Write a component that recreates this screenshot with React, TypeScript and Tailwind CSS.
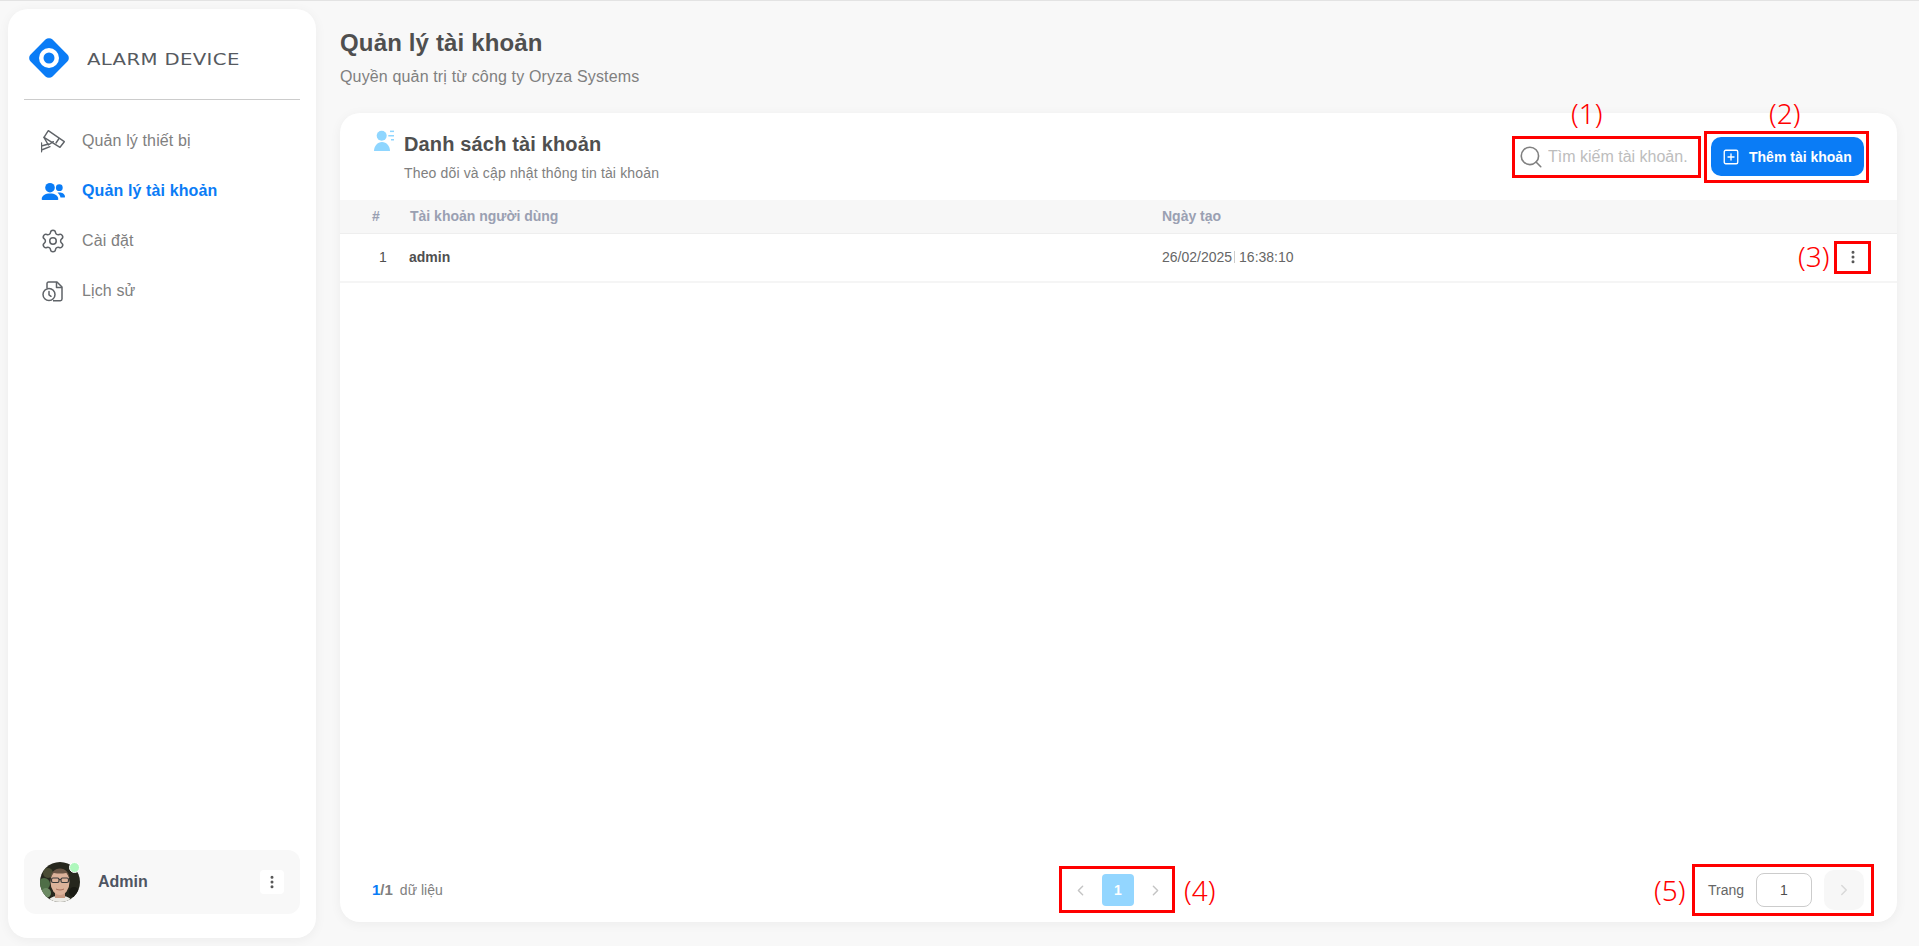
import { ChevronLeft, ChevronRight, EllipsisVertical, Search, Settings, SquarePlus } from 'lucide-react'

const font = "font-['Liberation_Sans',Arial,sans-serif]"

function Logo() {
  return (
    <svg viewBox="0 0 40 40" className="w-10 h-10 shrink-0">
      <rect x="4.500" y="4.500" width="31" height="31" rx="5" fill="#0a7cf6" transform="rotate(45 20 20)" />
      <circle cx="20" cy="20" r="10" fill="#fff" />
      <circle cx="20" cy="20" r="5.500" fill="#0a7cf6" />
    </svg>
  )
}

function CameraIcon() {
  return (
    <svg viewBox="0 0 24 24" className="w-6 h-6" fill="none" stroke="#5f6368" strokeWidth="1.400" strokeLinejoin="round" strokeLinecap="round">
      <path d="M7.300 1.700 23.300 12.700 19 18.300 3 8.300Z" />
      <path d="M3 8.300 7.300 16 12.300 12.700" />
      <path d="M18 9.500 15 14" />
      <path d="M.5 14v8.700M.5 17l7-2M.5 21l8.500-3.300" />
    </svg>
  )
}

function UsersIcon() {
  return (
    <svg viewBox="0 0 24 24" className="w-6 h-6" fill="#0a7cf6">
      <circle cx="9" cy="8.700" r="4.800" />
      <path d="M.7 20.200c0-3.800 3.700-5.700 8.300-5.700s8.300 1.900 8.300 5.700c0 .5-.4.800-.9.800H1.600c-.5 0-.9-.3-.9-.8Z" />
      <circle cx="18.300" cy="8.700" r="3.400" />
      <path d="M16.500 13.700c3.800-.6 7.500 1 7.500 4 0 .6-.4.900-1 .9h-3.500c-.3-2-1.300-3.600-3-4.900Z" />
    </svg>
  )
}

function HistoryIcon() {
  return (
    <svg viewBox="0 0 24 24" className="w-6 h-6" fill="none" stroke="#5f6368" strokeWidth="1.500" strokeLinejoin="round">
      <path d="M6 9V4.500C6 3.700 6.700 3 7.500 3H16l5 5v12c0 1-.8 1.700-1.700 1.700H12" />
      <path d="M15.500 3v5.500H21" />
      <circle cx="8" cy="15.500" r="6" />
      <path d="M8 12.500v3.300l2 1.500" strokeLinecap="round" />
    </svg>
  )
}

function AccountListIcon() {
  return (
    <svg viewBox="0 0 20 22" className="w-5 h-[22px]" fill="#8fd6ff">
      <circle cx="7.700" cy="5.700" r="5" />
      <path d="M0 21c0-5 3.500-9 8-9s8 4 8 9H0Z" />
      <rect x="16" y="0.600" width="4" height="1.500" />
      <rect x="14.300" y="5" width="5.700" height="1.500" />
      <rect x="17" y="9" width="3" height="1.500" />
    </svg>
  )
}

// Hand-drawn stand-in for the profile photo
function Avatar() {
  return (
    <div className="relative w-10 h-10 shrink-0">
      <svg viewBox="0 0 40 40" className="w-10 h-10 rounded-full">
        <rect width="40" height="40" fill="#26271d" />
        <circle cx="4" cy="22" r="6" fill="#4f6e47" />
        <circle cx="6" cy="31" r="5" fill="#6c8a63" />
        <circle cx="8" cy="11" r="5" fill="#4a4c34" />
        <circle cx="34" cy="30" r="5" fill="#1a1b14" />
        <path d="M8 40c1-5 6-6 12-6s11 1 12 6Z" fill="#ecebe6" />
        <rect x="15" y="28" width="10" height="8" fill="#c99c84" />
        <ellipse cx="20" cy="20" rx="9.500" ry="13" fill="#dcb29a" />
        <path d="M10.500 17c0-6 4-10.500 9.500-10.500S29.500 11 29.500 17c-1-4-2-5.500-3.500-6-4 .8-8 .8-12 0-1.500.5-2.500 2-3.500 6Z" fill="#6b5646" />
        <rect x="11.500" y="16" width="7.500" height="4.500" rx="1.500" fill="none" stroke="#3a3a3a" strokeWidth="1.200" />
        <rect x="21" y="16" width="7.500" height="4.500" rx="1.500" fill="none" stroke="#3a3a3a" strokeWidth="1.200" />
        <path d="M19 17.500h2" stroke="#3a3a3a" strokeWidth="1" />
        <path d="M16 27c2.500 1.300 5.500 1.300 8 0" fill="none" stroke="#a8705e" strokeWidth="1" />
      </svg>
      <span className="absolute top-0 right-[0.5px] w-[11px] h-[11px] rounded-full bg-[#aef8bc] border-[1.5px] border-white" />
    </div>
  )
}

const navItems = [
  { label: 'Quản lý thiết bị', icon: <CameraIcon /> },
  { label: 'Quản lý tài khoản', icon: <UsersIcon />, active: true },
  { label: 'Cài đặt', icon: <Settings className="w-[26px] h-[26px] shrink-0 text-[#5f6368]" strokeWidth={1.400} /> },
  { label: 'Lịch sử', icon: <HistoryIcon /> },
]

function Sidebar() {
  return (
    <aside className="flex flex-col w-[308px] h-[929px] shrink-0 bg-white rounded-[20px] shadow-[0_2px_12px_rgba(0,0,0,0.05)] px-4 pb-6">
      <div className="flex items-center gap-[18px] h-[91px] pt-[8px] pl-[5px] border-b border-[#cccccc]">
        <Logo />
        <span className="mt-[3px] origin-left scale-x-[1.23] font-['DejaVu_Sans',sans-serif] text-base tracking-[0.3px] text-[#565a5f]">
          ALARM DEVICE
        </span>
      </div>
      <nav className="flex flex-col gap-[10px] mt-[21px] pl-[17px]">
        {navItems.map((item) => (
          <div key={item.label} className="flex items-center gap-[17px] h-10">
            <span className="w-6 h-6 flex items-center justify-center">{item.icon}</span>
            <span
              className={
                item.active
                  ? 'text-base tracking-[0.12px] font-bold text-[#0a7cf6]'
                  : 'text-base tracking-[0.12px] text-[#808080]'
              }
            >
              {item.label}
            </span>
          </div>
        ))}
      </nav>
      <div className="mt-auto flex items-center h-16 pl-4 pr-4 rounded-xl bg-[#f8f8f8]">
        <Avatar />
        <span className="ml-[18px] text-base font-bold text-[#4f5562]">Admin</span>
        <button className="ml-auto w-6 h-6 flex items-center justify-center bg-white rounded">
          <EllipsisVertical className="w-4 h-4 text-[#555555]" strokeWidth={2.500} />
        </button>
      </div>
    </aside>
  )
}

function CardHeader() {
  return (
    <div className="flex h-[87px] shrink-0 pl-[34px] pr-[33px]">
      <div className="pt-[17px]">
        <AccountListIcon />
      </div>
      <div className="ml-[10px] pt-[18px]">
        <h2 className="text-xl leading-[26px] tracking-[0.15px] font-bold text-[#4f4f4f]">Danh sách tài khoản</h2>
        <p className="mt-[7px] text-sm leading-[18px] tracking-[0.15px] text-[#808080]">
          Theo dõi và cập nhật thông tin tài khoản
        </p>
      </div>
      <div className="ml-auto flex items-center gap-[10px] h-[39px] mt-6">
        <label className="flex items-center gap-[4px] w-[187px] pl-[4px]">
          <Search className="w-[26px] h-[26px] text-[#808080] shrink-0" strokeWidth={1.500} />
          <input
            readOnly
            placeholder="Tìm kiếm tài khoản..."
            className="w-[140px] bg-transparent outline-none text-base placeholder:text-[#bdbdbd]"
          />
        </label>
        <button className="flex items-center gap-[9px] w-[153px] h-[39px] pl-[11px] rounded-[10px] bg-[#0a7cf6] text-sm font-bold text-white">
          <SquarePlus className="w-[18px] h-[18px]" strokeWidth={1.800} />
          Thêm tài khoản
        </button>
      </div>
    </div>
  )
}

function AccountTable() {
  return (
    <div className="flex-1">
      <div className="grid grid-cols-[70px_752px_1fr] items-center h-[34px] pb-[2px] bg-[#f7f7f7] border-b border-[#eeeeee] text-sm font-bold text-[#9aa0b2]">
        <span className="pl-8">#</span>
        <span>Tài khoản người dùng</span>
        <span>Ngày tạo</span>
      </div>
      <div className="grid grid-cols-[70px_752px_1fr_auto] items-center h-[49px] pb-[1px] border-b-[2px] border-[#f5f5f5] text-sm text-[#4f4f4f] pr-[33px]">
        <span className="pl-[39px]">1</span>
        <span className="-ml-px font-bold">admin</span>
        <span className="flex items-center text-[#666666]">
          <span>26/02/2025</span>
          <span className="ml-[2px] mr-[4px] w-px h-3 bg-[#cccccc]" />
          <span>16:38:10</span>
        </span>
        <EllipsisVertical className="w-4 h-4 text-[#555555] mr-[3px]" strokeWidth={2.500} />
      </div>
    </div>
  )
}

function CardFooter() {
  return (
    <div className="grid grid-cols-[1fr_auto_1fr] items-center h-[64px] pl-8 pr-[33px]">
      <div className="flex items-center text-sm text-[#808080]">
        <span className="text-[15px] font-bold">
          <span className="text-[#0a7cf6]">1</span>/1
        </span>
        <span className="ml-[7px]">dữ liệu</span>
      </div>
      <div className="flex items-center gap-[5px]">
        <button className="w-8 h-8 flex items-center justify-center text-[#c4c4c4]">
          <ChevronLeft className="w-[17px] h-[17px] -ml-[2px]" strokeWidth={2} />
        </button>
        <button className="w-8 h-8 rounded bg-[#93d6ff] text-sm font-bold text-white">1</button>
        <button className="w-8 h-8 flex items-center justify-center text-[#c4c4c4]">
          <ChevronRight className="w-[17px] h-[17px]" strokeWidth={2} />
        </button>
      </div>
      <div className="flex items-center justify-end">
        <span className="text-sm text-[#666666]">Trang</span>
        <div className="ml-3 w-14 h-[34px] flex items-center justify-center rounded-lg border border-[#cccccc] text-sm text-[#4f4f4f]">
          1
        </div>
        <button className="ml-3 w-10 h-10 flex items-center justify-center rounded-[10px] bg-[#f7f7f7] text-[#d9d9d9]">
          <ChevronRight className="w-[18px] h-[18px]" strokeWidth={2} />
        </button>
      </div>
    </div>
  )
}

// Red review marks drawn on top of the screenshot
function Annotations() {
  const label = "absolute font-['Noto_Sans',sans-serif] font-light text-[28px] leading-none text-[#ff0000]"
  return (
    <>
      <div className="absolute left-[1512px] top-[135px] w-[189px] h-[42px] border-[3px] border-[#ff0000]" />
      <div className="absolute left-[1704px] top-[130px] w-[165px] h-[52px] border-[3px] border-[#ff0000]" />
      <div className="absolute left-[1834px] top-[240px] w-[37px] h-[33px] border-[3px] border-[#ff0000]" />
      <div className="absolute left-[1059px] top-[865px] w-[116px] h-[47px] border-[3px] border-[#ff0000]" />
      <div className="absolute left-[1692px] top-[863px] w-[182px] h-[52px] border-[3px] border-[#ff0000]" />
      <span className={`${label} left-[1571px] top-[98px]`}>(1)</span>
      <span className={`${label} left-[1769px] top-[98px]`}>(2)</span>
      <span className={`${label} left-[1798px] top-[241px]`}>(3)</span>
      <span className={`${label} left-[1184px] top-[875px]`}>(4)</span>
      <span className={`${label} left-[1654px] top-[875px]`}>(5)</span>
    </>
  )
}

export default function App() {
  return (
    <div className={`relative flex h-[946px] overflow-hidden border-t border-[#e3e3e3] bg-[#f8f8f8] pl-2 pt-2 ${font}`}>
      <Sidebar />
      <main className="flex-1 min-w-0 flex flex-col pl-6 pr-[22px]">
        <header className="h-[104px] shrink-0 pt-[20px]">
          <h1 className="text-2xl leading-7 tracking-[0.15px] font-bold text-[#4f4f4f]">Quản lý tài khoản</h1>
          <p className="mt-[8px] text-base tracking-[0.15px] text-[#808080]">Quyền quản trị từ công ty Oryza Systems</p>
        </header>
        <section className="flex flex-col h-[809px] bg-white rounded-[20px] shadow-[0_2px_12px_rgba(0,0,0,0.05)]">
          <CardHeader />
          <AccountTable />
          <CardFooter />
        </section>
      </main>
      <Annotations />
    </div>
  )
}
